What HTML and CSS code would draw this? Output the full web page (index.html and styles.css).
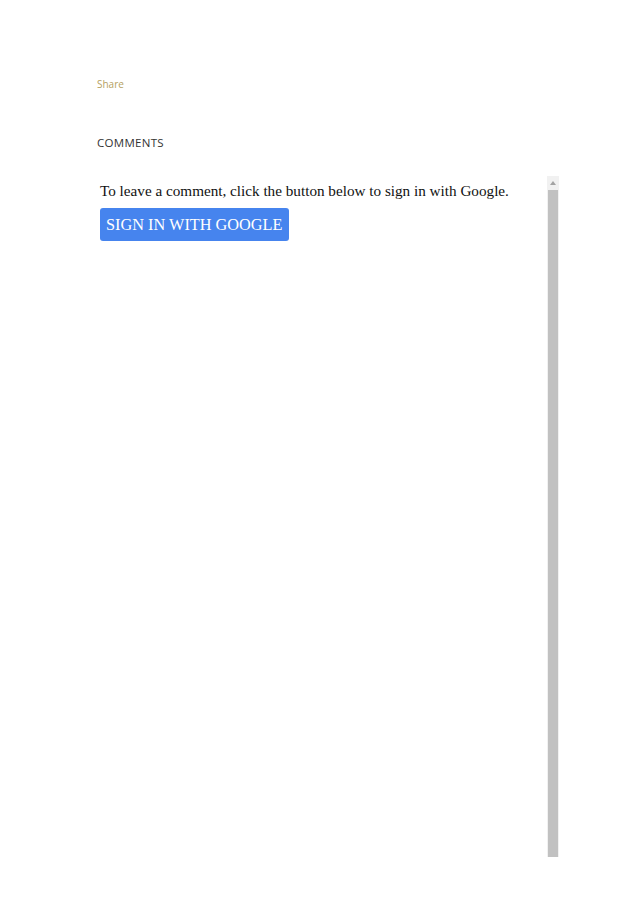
FILE: index.html
```html
<!DOCTYPE html>
<html lang="en">
<head>
  <meta charset="UTF-8">
  <meta name="viewport" content="width=device-width, initial-scale=1.0">
  <title>Comments</title>
  <link rel="stylesheet" href="styles.css">
</head>
<body>

  <div class="post">
    <!-- Share link -->
    <a class="share" href="#">Share</a>

    <h2 class="comments-title">COMMENTS</h2>

    <!-- Comment frame with its own scrollbar -->
    <div class="comment-frame">
      <div class="comment-body">
        <p class="signin-text">To leave a comment, click the button below to sign in with Google.</p>
        <button class="signin-btn">SIGN IN WITH GOOGLE</button>
      </div>
      <div class="scrollbar">
        <div class="scroll-arrow"></div>
        <div class="scroll-thumb"></div>
      </div>
    </div>
  </div>

</body>
</html>
```

FILE: styles.css
```css
body {
  margin: 0;
  background-color: #fff;
  font-family: "Open Sans", Arial, sans-serif;
}

.post {
  padding: 77px 80px 0 97px;
}

.share {
  display: block;
  font-size: 10px;
  line-height: 14px;
  color: #b59f62;
  text-decoration: none;
}

.comments-title {
  margin: 44px 0 0 0;
  font-size: 11.5px;
  line-height: 16px;
  font-weight: 400;
  letter-spacing: 0.3px;
  color: #333;
}

/* Frame holding the comment form */
.comment-frame {
  display: flex;
  margin-top: 25px;
  width: 462px;
  height: 681px;
}

.comment-body {
  flex: 1;
  padding: 5px 0 0 3px;
  font-family: "Liberation Serif", "Times New Roman", serif;
}

.signin-text {
  margin: 0;
  font-size: 15.2px;
  line-height: 20px;
  color: #111;
}

.signin-btn {
  margin-top: 7px;
  padding: 6px 6px 5px 6px;
  border: none;
  border-radius: 3px;
  background-color: #4684ee;
  color: #fff;
  font-family: "Liberation Serif", "Times New Roman", serif;
  font-size: 16.3px;
  line-height: 22px;
}

/* Fake scrollbar on the right */
.scrollbar {
  width: 12px;
  display: flex;
  flex-direction: column;
  background-color: #f1f1f1;
}

.scroll-arrow {
  height: 14px;
  position: relative;
}

.scroll-arrow::after {
  content: "";
  position: absolute;
  left: 3px;
  top: 5px;
  border-left: 3px solid transparent;
  border-right: 3px solid transparent;
  border-bottom: 4px solid #a3a3a3;
}

.scroll-thumb {
  flex: 1;
  margin: 0 1px;
  background-color: #c1c1c1;
}
```
